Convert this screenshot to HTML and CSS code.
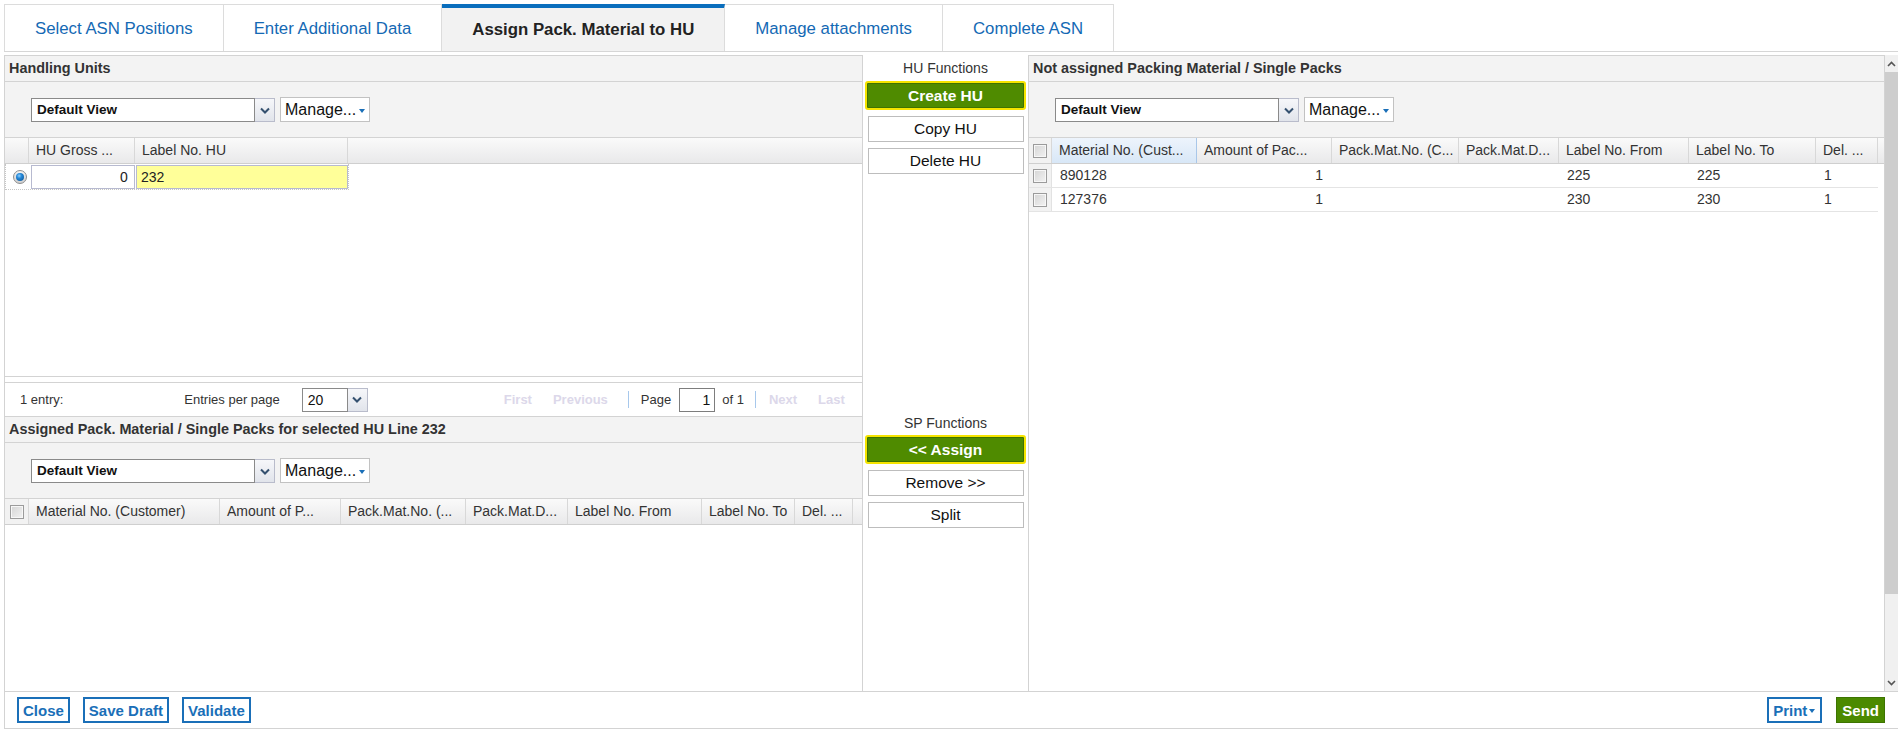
FILE: index.html
```html
<!DOCTYPE html>
<html lang="en">
<head>
<meta charset="utf-8">
<title>Assign Pack. Material to HU</title>
<link rel="stylesheet" href="styles.css">
</head>
<body>
<div class="page">
  <nav class="tabs">
    <div class="tab">Select ASN Positions</div>
    <div class="tab">Enter Additional Data</div>
    <div class="tab active">Assign Pack. Material to HU</div>
    <div class="tab">Manage attachments</div>
    <div class="tab">Complete ASN</div>
  </nav>

  <div class="main">
    <section class="left">
      <div class="hu-block">
        <div class="ph">Handling Units</div>
        <div class="toolbar">
          <div class="viewsel">
            <span class="vs-text">Default View</span>
            <span class="vs-btn"><svg width="10" height="7" viewBox="0 0 10 7"><path d="M1 1.5 L5 5.5 L9 1.5" fill="none" stroke="#34506f" stroke-width="2"/></svg></span>
          </div>
          <div class="manage">Manage...<span class="tri"></span></div>
        </div>
        <div class="hu-grid">
          <div class="ghead">
            <div class="gc w-rad"></div>
            <div class="gc w-gross">HU Gross ...</div>
            <div class="gc w-label">Label No. HU</div>
          </div>
          <div class="hu-row">
            <div class="w-rad rad-cell"><span class="radio"></span></div>
            <div class="w-gross in-cell"><span class="inp num">0</span></div>
            <div class="w-label in-cell"><span class="inp hl">232</span></div>
          </div>
        </div>
        <div class="pager">
          <span class="pg-count">1 entry:</span>
          <span class="pg-epp">Entries per page</span>
          <div class="pg-sel">
            <span class="pg-sel-val">20</span>
            <span class="vs-btn"><svg width="10" height="7" viewBox="0 0 10 7"><path d="M1 1.5 L5 5.5 L9 1.5" fill="none" stroke="#34506f" stroke-width="2"/></svg></span>
          </div>
          <span class="pg-nav pg-first">First</span>
          <span class="pg-nav pg-prev">Previous</span>
          <span class="pg-sep sep-a"></span>
          <span class="pg-page">Page</span>
          <span class="pg-input">1</span>
          <span class="pg-of">of 1</span>
          <span class="pg-sep sep-b"></span>
          <span class="pg-nav pg-next">Next</span>
          <span class="pg-nav pg-last">Last</span>
        </div>
      </div>

      <div class="sp-block">
        <div class="ph">Assigned Pack. Material / Single Packs for selected HU Line 232</div>
        <div class="toolbar">
          <div class="viewsel">
            <span class="vs-text">Default View</span>
            <span class="vs-btn"><svg width="10" height="7" viewBox="0 0 10 7"><path d="M1 1.5 L5 5.5 L9 1.5" fill="none" stroke="#34506f" stroke-width="2"/></svg></span>
          </div>
          <div class="manage">Manage...<span class="tri"></span></div>
        </div>
        <div class="ghead">
          <div class="gc l-chk chk-cell"><span class="chk"></span></div>
          <div class="gc l-mat">Material No. (Customer)</div>
          <div class="gc l-amt">Amount of P...</div>
          <div class="gc l-pmn">Pack.Mat.No. (...</div>
          <div class="gc l-pmd">Pack.Mat.D...</div>
          <div class="gc l-from">Label No. From</div>
          <div class="gc l-to">Label No. To</div>
          <div class="gc l-del">Del. ...</div>
        </div>
        <div class="gbody"></div>
      </div>
    </section>

    <section class="mid">
      <div class="fn-group">
        <div class="fn-label">HU Functions</div>
        <div class="fbtn go">Create HU</div>
        <div class="fbtn">Copy HU</div>
        <div class="fbtn">Delete HU</div>
      </div>
      <div class="fn-group">
        <div class="fn-label sp">SP Functions</div>
        <div class="fbtn go">&lt;&lt; Assign</div>
        <div class="fbtn">Remove &gt;&gt;</div>
        <div class="fbtn">Split</div>
      </div>
    </section>

    <section class="right">
      <div class="ph">Not assigned Packing Material / Single Packs</div>
      <div class="toolbar">
        <div class="viewsel">
          <span class="vs-text">Default View</span>
          <span class="vs-btn"><svg width="10" height="7" viewBox="0 0 10 7"><path d="M1 1.5 L5 5.5 L9 1.5" fill="none" stroke="#34506f" stroke-width="2"/></svg></span>
        </div>
        <div class="manage">Manage...<span class="tri"></span></div>
      </div>
      <div class="ghead">
        <div class="gc r-chk chk-cell"><span class="chk"></span></div>
        <div class="gc r-mat sorted">Material No. (Cust...</div>
        <div class="gc r-amt">Amount of Pac...</div>
        <div class="gc r-pmn">Pack.Mat.No. (C...</div>
        <div class="gc r-pmd">Pack.Mat.D...</div>
        <div class="gc r-from">Label No. From</div>
        <div class="gc r-to">Label No. To</div>
        <div class="gc r-del">Del. ...</div>
      </div>
      <div class="drow">
        <div class="dc r-chk chk-cell"><span class="chk"></span></div>
        <div class="dc r-mat">890128</div>
        <div class="dc r-amt num">1</div>
        <div class="dc r-pmn"></div>
        <div class="dc r-pmd"></div>
        <div class="dc r-from">225</div>
        <div class="dc r-to">225</div>
        <div class="dc r-del">1</div>
      </div>
      <div class="drow">
        <div class="dc r-chk chk-cell"><span class="chk"></span></div>
        <div class="dc r-mat">127376</div>
        <div class="dc r-amt num">1</div>
        <div class="dc r-pmn"></div>
        <div class="dc r-pmd"></div>
        <div class="dc r-from">230</div>
        <div class="dc r-to">230</div>
        <div class="dc r-del">1</div>
      </div>
    </section>

    <div class="vscroll">
      <div class="sb-arrow"><svg width="9" height="6" viewBox="0 0 9 6"><path d="M1 5 L4.5 1.5 L8 5" fill="none" stroke="#555" stroke-width="1.6"/></svg></div>
      <div class="sb-thumb"></div>
      <div class="sb-track"></div>
      <div class="sb-arrow"><svg width="9" height="6" viewBox="0 0 9 6"><path d="M1 1 L4.5 4.5 L8 1" fill="none" stroke="#555" stroke-width="1.6"/></svg></div>
    </div>
  </div>

  <footer class="footer">
    <div class="fb">Close</div>
    <div class="fb">Save Draft</div>
    <div class="fb">Validate</div>
    <div class="fb print">Print<span class="tri"></span></div>
    <div class="fb send">Send</div>
  </footer>
</div>
</body>
</html>
```

FILE: styles.css
```css
* { box-sizing: border-box; }

html, body {
  margin: 0;
  padding: 0;
  background: #ffffff;
}

body {
  width: 1898px;
  height: 730px;
  overflow: hidden;
  font-family: "Liberation Sans", Arial, sans-serif;
  color: #333333;
}

.page {
  padding-top: 4px;
}

/* ---------- tabs ---------- */
.tabs {
  display: flex;
  margin-left: 4px;
  height: 48px;
  border-bottom: 1px solid #d6d6d6;
}

.tab {
  height: 47px;
  padding: 2px 30px 0;
  display: flex;
  align-items: center;
  border-top: 1px solid #dcdcdc;
  border-right: 1px solid #dcdcdc;
  font-size: 16.8px;
  color: #1469b4;
  white-space: nowrap;
  background: #ffffff;
}

.tab:first-child {
  border-left: 1px solid #dcdcdc;
}

.tab.active {
  border-top: 4px solid #0a6ebd;
  padding-top: 0;
  background: #f2f2f2;
  color: #222222;
  font-weight: bold;
}

/* ---------- main area ---------- */
.main {
  display: flex;
  margin-top: 3px;
  margin-left: 4px;
  height: 636px;
}

.left {
  width: 858px;
  border-left: 1px solid #d3d3d3;
  border-top: 1px solid #d3d3d3;
  display: flex;
  flex-direction: column;
}

.hu-block {
  height: 361px;
  display: flex;
  flex-direction: column;
}

.sp-block {
  flex: 1;
  display: flex;
  flex-direction: column;
}

.ph {
  height: 26px;
  flex: none;
  padding-left: 4px;
  background: #f3f3f3;
  border-bottom: 1px solid #d3d3d3;
  font-size: 14.4px;
  font-weight: bold;
  line-height: 25px;
  color: #333333;
  white-space: nowrap;
}

.toolbar {
  height: 56px;
  flex: none;
  background: #f3f3f3;
  border-bottom: 1px solid #d3d3d3;
  display: flex;
  align-items: flex-start;
  padding: 15px 0 0 26px;
}

.viewsel {
  display: flex;
  height: 24px;
  margin-top: 1px;
}

.vs-text {
  width: 224px;
  height: 24px;
  border: 1px solid #8a8a8a;
  background: #ffffff;
  font-size: 13.5px;
  font-weight: bold;
  color: #111111;
  padding-left: 5px;
  line-height: 22px;
}

.vs-btn {
  width: 20px;
  height: 24px;
  border: 1px solid #b9bccb;
  border-left: none;
  background: linear-gradient(#f6f7fa, #e1e4eb);
  display: flex;
  align-items: center;
  justify-content: center;
}

.manage {
  margin-left: 5px;
  width: 90px;
  height: 25px;
  border: 1px solid #c2c2c2;
  background: #ffffff;
  font-size: 16px;
  color: #111111;
  padding-left: 4px;
  display: flex;
  align-items: center;
  white-space: nowrap;
}

.tri {
  display: inline-block;
  width: 0;
  height: 0;
  margin-left: 3px;
  margin-top: 2px;
  border-left: 3px solid transparent;
  border-right: 3px solid transparent;
  border-top: 4px solid #1a6fb8;
}

/* ---------- grids ---------- */
.ghead {
  display: flex;
  height: 26px;
  flex: none;
  background: linear-gradient(#fafafa, #e9e9ea);
  border-bottom: 1px solid #cfcfcf;
}

.gc {
  height: 25px;
  padding: 0 7px;
  line-height: 25px;
  font-size: 14px;
  color: #333333;
  border-right: 1px solid #d8d8d8;
  white-space: nowrap;
  overflow: hidden;
  flex: none;
}

.gc.sorted {
  background: linear-gradient(#edf4fc, #d8e7f7);
  border-right: 1px solid #a9c7e9;
}

.chk-cell {
  padding: 0;
  display: flex;
  align-items: center;
  justify-content: center;
  background: #f2f2f2;
}

.chk {
  display: block;
  width: 14px;
  height: 14px;
  border: 1px solid #9b9b9b;
  background: linear-gradient(135deg, #d5d5d5, #f2f2f2);
  box-shadow: inset 0 0 0 1px #f7f7f7;
}

.hu-grid {
  flex: 1;
  border-bottom: 1px solid #d3d3d3;
}

.w-rad { width: 24px; }
.w-gross { width: 106px; }
.w-label { width: 213px; }

.hu-row {
  display: flex;
  height: 26px;
  width: 344px;
  border: 1px dotted #c6c6c6;
  border-top: none;
}

.rad-cell {
  display: flex;
  align-items: center;
  padding-left: 7px;
}

.radio {
  position: relative;
  display: block;
  width: 14px;
  height: 14px;
  border-radius: 50%;
  border: 1px solid #8d8d8d;
  background: linear-gradient(#f4f4f4, #cfcfcf);
}

.radio::after {
  content: "";
  position: absolute;
  left: 2px;
  top: 2px;
  width: 8px;
  height: 8px;
  border-radius: 50%;
  background: radial-gradient(circle at 40% 35%, #8fd0ff 0, #2488d8 35%, #0c4f8e 100%);
}

.in-cell {
  display: flex;
  align-items: center;
  padding-left: 1px;
}

.inp {
  display: block;
  height: 24px;
  width: 100%;
  border: 1px solid #b7bad0;
  font-size: 14px;
  line-height: 22px;
  color: #222222;
  background: #ffffff;
  padding: 0 6px 0 4px;
}

.w-gross .inp { width: 104px; }
.w-label .inp { width: 212px; }

.inp.num { text-align: right; }
.inp.hl { background: #ffff99; }

/* ---------- pager ---------- */
.pager {
  margin-top: 5px;
  height: 35px;
  flex: none;
  border-top: 1px solid #d3d3d3;
  border-bottom: 1px solid #d3d3d3;
  display: flex;
  align-items: center;
  padding-left: 15px;
  font-size: 13px;
  color: #333333;
  white-space: nowrap;
}

.pg-epp { margin-left: 121px; }

.pg-sel {
  margin-left: 22px;
  display: flex;
  height: 24px;
}

.pg-sel-val {
  width: 46px;
  height: 24px;
  border: 1px solid #8a8a8a;
  background: #ffffff;
  font-size: 14px;
  line-height: 22px;
  padding-left: 5px;
  color: #111111;
}

.pg-nav {
  font-weight: bold;
  color: #dcd8ea;
}

.pg-first { margin-left: 136px; }
.pg-prev { margin-left: 21px; }

.pg-sep {
  display: block;
  width: 1px;
  height: 17px;
  background: #a7c8ec;
}

.sep-a { margin-left: 20px; }
.pg-page { margin-left: 12px; }

.pg-input {
  margin-left: 8px;
  width: 36px;
  height: 24px;
  border: 1px solid #7d7d7d;
  background: #ffffff;
  text-align: right;
  padding-right: 4px;
  font-size: 14px;
  line-height: 22px;
  color: #111111;
}

.pg-of { margin-left: 7px; }
.sep-b { margin-left: 11px; }
.pg-next { margin-left: 13px; }
.pg-last { margin-left: 21px; }

/* bottom-left grid columns */
.l-chk { width: 24px; }
.l-mat { width: 191px; }
.l-amt { width: 121px; }
.l-pmn { width: 125px; }
.l-pmd { width: 102px; }
.l-from { width: 134px; }
.l-to { width: 93px; }
.l-del { width: 58px; }

.gbody {
  flex: 1;
  background: #ffffff;
}

/* ---------- middle functions ---------- */
.mid {
  width: 166px;
  border-left: 1px solid #d3d3d3;
  display: grid;
  grid-template-rows: 356px 1fr;
  background: #ffffff;
}

.fn-group {
  display: flex;
  flex-direction: column;
  align-items: center;
}

.fn-label {
  height: 26px;
  line-height: 26px;
  font-size: 14px;
  color: #333333;
  text-align: center;
}

.fn-label.sp {
  height: 24px;
  line-height: 24px;
}

.fbtn {
  width: 156px;
  height: 26px;
  margin-top: 6px;
  border: 1px solid #bdbdbd;
  background: #ffffff;
  font-size: 15.5px;
  color: #111111;
  display: flex;
  align-items: center;
  justify-content: center;
}

.fbtn.go {
  width: 161px;
  height: 29px;
  margin-top: 0;
  background: #4f8b00;
  border: 2px solid #f5e400;
  border-radius: 3px;
  box-shadow: inset 0 0 0 1px #3f7300;
  color: #ffffff;
  font-weight: bold;
}

/* ---------- right panel ---------- */
.right {
  width: 857px;
  border-left: 1px solid #d3d3d3;
  border-top: 1px solid #d3d3d3;
  border-right: 1px solid #d3d3d3;
  display: flex;
  flex-direction: column;
}

.r-chk { width: 23px; }
.r-mat { width: 145px; }
.r-amt { width: 135px; }
.r-pmn { width: 127px; }
.r-pmd { width: 100px; }
.r-from { width: 130px; }
.r-to { width: 127px; }
.r-del { width: 62px; }

.drow {
  display: flex;
  height: 24px;
  width: 849px;
  border-bottom: 1px solid #e4e4e4;
}

.dc {
  flex: none;
  height: 23px;
  padding: 0 8px;
  line-height: 23px;
  font-size: 14px;
  color: #333333;
  white-space: nowrap;
}

.dc.chk-cell {
  border-right: 1px solid #e2e2e2;
  padding: 0;
}

.dc.num {
  text-align: right;
  padding-right: 9px;
}

/* ---------- scrollbar ---------- */
.vscroll {
  width: 13px;
  background: #f0f0f0;
  display: flex;
  flex-direction: column;
}

.sb-arrow {
  height: 17px;
  flex: none;
  display: flex;
  align-items: center;
  justify-content: center;
}

.sb-thumb {
  height: 522px;
  flex: none;
  background: #cdcdcd;
}

.sb-track {
  flex: 1;
}

/* ---------- footer ---------- */
.footer {
  margin-left: 4px;
  height: 38px;
  border-top: 1px solid #d3d3d3;
  border-bottom: 1px solid #d3d3d3;
  border-left: 1px solid #d3d3d3;
  display: flex;
  align-items: center;
  gap: 13px;
  padding: 0 13px 0 12px;
}

.fb {
  height: 26px;
  border: 2px solid #1a6fb8;
  color: #1a6fb8;
  font-size: 15px;
  font-weight: bold;
  padding: 0 4px;
  display: flex;
  align-items: center;
  background: #ffffff;
  white-space: nowrap;
}

.fb.print {
  margin-left: auto;
  padding-right: 5px;
}

.fb.print .tri {
  margin-left: 2px;
}

.fb.send {
  margin-left: 1px;
  background: #4b8a00;
  border: 1px solid #3d7400;
  color: #ffffff;
  padding: 0 5px;
}
```
